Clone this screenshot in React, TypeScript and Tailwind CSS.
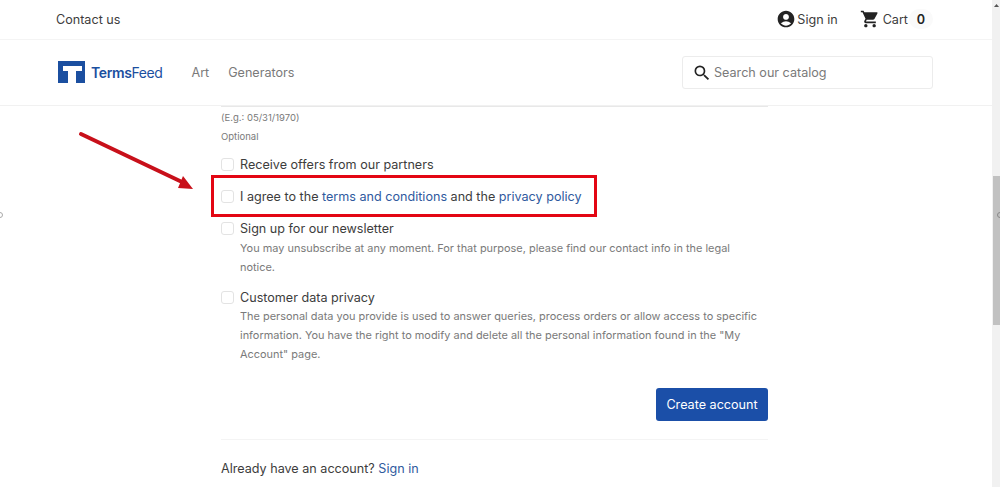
import { MdAccountCircle, MdShoppingCart, MdSearch } from "react-icons/md";

const CheckBox = () => (
  <span className="mt-[2px] h-[13px] w-[13px] shrink-0 rounded-[3px] border border-[#e3e3e3] bg-white" />
);

const Logo = () => (
  <svg width="28" height="23" viewBox="0 0 28 23" aria-hidden="true">
    <path d="M0 0H27V22H0Z" fill="#1b4fa0" />
    <path d="M5 5H24V10H18V22H10V10H5Z" fill="#fff" />
  </svg>
);

const App = () => {
  return (
    <div className="flex h-[487px] w-full overflow-hidden bg-white font-['Inter',sans-serif] text-[12.6px] text-[#3d3d3d]">
      <div className="relative min-w-0 flex-1">
        <div className="flex h-10 items-center justify-between border-b border-[#f4f4f4] pl-14 pr-[59px]">
          <a className="pt-[2px]">Contact us</a>
          <div className="flex items-center">
            <MdAccountCircle className="text-[20px] text-[#232323]" />
            <span className="ml-[1px] pt-[2px]">Sign in</span>
            <MdShoppingCart className="ml-[22px] text-[20px] text-[#232323]" />
            <span className="ml-[3px] pt-[2px]">Cart</span>
            <span className="ml-[1px] flex h-[20px] w-[24px] items-center justify-center rounded-full bg-[#fafafa] pt-[2px] font-semibold text-[#232323]">
              0
            </span>
          </div>
        </div>

        <div className="flex h-[66px] items-center justify-between border-b border-[#f1f1f1] pl-[58px] pr-[59px]">
          <div className="flex items-center">
            <Logo />
            <span className="ml-[5px] text-[14px] font-semibold tracking-[-0.4px] text-[#1b4fa0]">
              Terms<span className="font-normal">Feed</span>
            </span>
            <span className="ml-[29px] pt-[2px] text-[#7a7a7a]">Art</span>
            <span className="ml-[19px] pt-[2px] text-[#7a7a7a]">Generators</span>
          </div>
          <div className="flex h-[33px] w-[251px] items-center rounded-[3px] border border-[#ececec] pl-[9px]">
            <MdSearch className="text-[20px] text-[#232323]" />
            <span className="ml-[2px] pt-[2px] text-[#7a7a7a]">Search our catalog</span>
          </div>
        </div>

        <div className="ml-[221px] w-[547px]">
          <div className="h-[1px] bg-[#e8e8e8]" />
          <p className="mt-[5px] text-[9.5px] leading-[12px] text-[#7a7a7a]">(E.g.: 05/31/1970)</p>
          <p className="mt-[7px] text-[9.5px] leading-[12px] text-[#7a7a7a]">Optional</p>

          <div className="mt-[13px] flex gap-[6px] leading-[18px]">
            <CheckBox />
            <span>Receive offers from our partners</span>
          </div>
          <div className="mt-[14px] flex gap-[6px] leading-[18px]">
            <CheckBox />
            <span>
              I agree to the <a className="text-[#2f5a9e]">terms and conditions</a> and the{" "}
              <a className="text-[#2f5a9e]">privacy policy</a>
            </span>
          </div>
          <div className="mt-[14px] flex gap-[6px] leading-[18px]">
            <CheckBox />
            <div>
              <p>Sign up for our newsletter</p>
              <p className="mt-[1px] text-[10.95px] leading-[19px] text-[#7a7a7a]">
                You may unsubscribe at any moment. For that purpose, please find our contact info in the legal notice.
              </p>
            </div>
          </div>
          <div className="mt-[12px] flex gap-[6px] leading-[18px]">
            <CheckBox />
            <div>
              <p>Customer data privacy</p>
              <p className="text-[10.95px] leading-[19px] text-[#7a7a7a]">
                The personal data you provide is used to answer queries, process orders or allow access to specific
                information. You have the right to modify and delete all the personal information found in the "My
                Account" page.
              </p>
            </div>
          </div>

          <div className="mt-[24px] flex justify-end">
            <button className="h-[33px] w-[112px] rounded-[3px] bg-[#1b4fa8] pt-[1px] text-[12.6px] text-white">
              Create account
            </button>
          </div>
          <div className="mt-[18px] h-[1px] bg-[#f4f4f4]" />
          <p className="mt-[20px] leading-[18px]">
            Already have an account? <a className="text-[#2f5a9e]">Sign in</a>
          </p>
        </div>

        {/* annotation drawn over the page */}
        <div className="absolute left-[211px] top-[175px] h-[42px] w-[386px] border-[3px] border-[#e30613]" />
        <svg className="absolute left-[76px] top-[130px]" width="120" height="62" viewBox="0 0 120 62" aria-hidden="true">
          <path d="M5 4L106 52" stroke="#c8101a" strokeWidth="4" strokeLinecap="round" />
          <path d="M117 59L102 58L107 46Z" fill="#c8101a" />
        </svg>
        <span className="absolute left-[-3px] top-[212px] h-[6px] w-[6px] rounded-full border border-[#aaa]" />
      </div>

      <div className="relative flex w-2 shrink-0 flex-col bg-[#f1f1f1]">
        <svg className="absolute left-[2px] top-[4px]" width="5" height="3" viewBox="0 0 5 3" aria-hidden="true">
          <path d="M2.5 0L5 3H0Z" fill="#555" />
        </svg>
        <div className="mt-[176px] ml-[1px] h-[149px] bg-[#c1c1c1]" />
        <span className="absolute left-[5px] top-[212px] h-[6px] w-[6px] rounded-full border border-[#888]" />
      </div>
    </div>
  );
};

export default App;
